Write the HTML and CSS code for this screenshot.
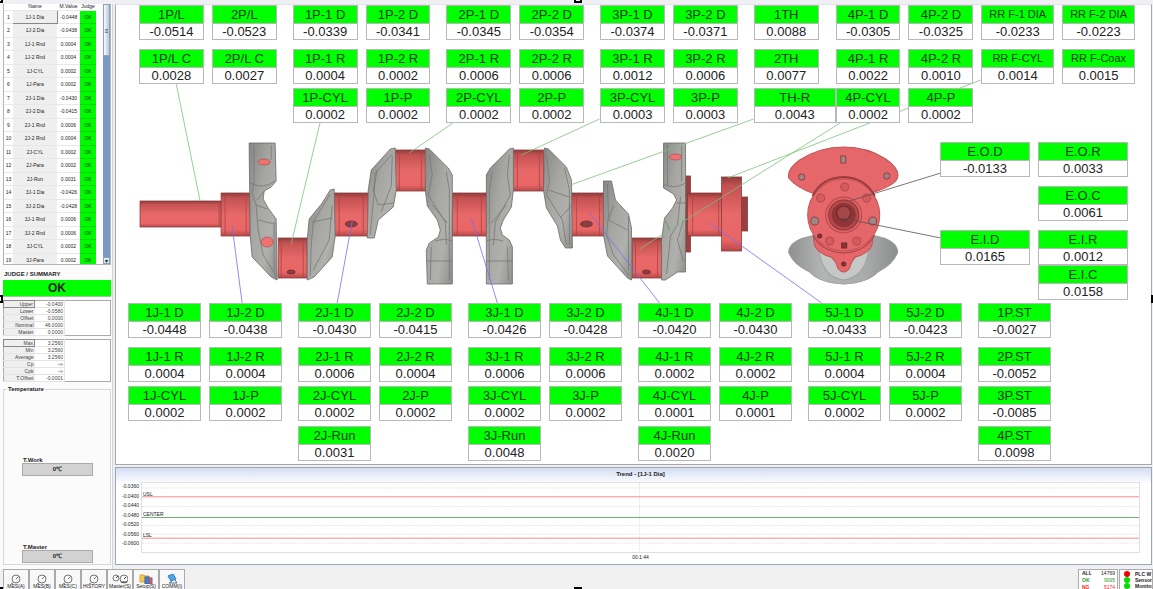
FILE: index.html
```html
<!DOCTYPE html>
<html lang="en">
<head>
  <meta charset="UTF-8" />
  <meta name="viewport" content="width=device-width, initial-scale=1.0"/>
  <title>Crankshaft Measuring</title>
  <link rel="stylesheet" href="styles.css">
</head>
<body>

  <div class="main">

    <!-- LEFT SIDE -->
    <aside class="sidebar">
      <div class="list-box">
        <table class="list">
          <thead>
            <tr><th></th><th>Name</th><th>M.Value</th><th>Judge</th></tr>
          </thead>
          <tbody>
            <tr><td>1</td><th class="selected">1J-1 Dia</th><td>-0.0448</td><td class="ok">OK</td></tr>
            <tr><td>2</td><th>1J-2 Dia</th><td>-0.0438</td><td class="ok">OK</td></tr>
            <tr><td>3</td><th>1J-1 Rnd</th><td>0.0004</td><td class="ok">OK</td></tr>
            <tr><td>4</td><th>1J-2 Rnd</th><td>0.0004</td><td class="ok">OK</td></tr>
            <tr><td>5</td><th>1J-CYL</th><td>0.0002</td><td class="ok">OK</td></tr>
            <tr><td>6</td><th>1J-Para</th><td>0.0002</td><td class="ok">OK</td></tr>
            <tr><td>7</td><th>2J-1 Dia</th><td>-0.0430</td><td class="ok">OK</td></tr>
            <tr><td>8</td><th>2J-2 Dia</th><td>-0.0415</td><td class="ok">OK</td></tr>
            <tr><td>9</td><th>2J-1 Rnd</th><td>0.0006</td><td class="ok">OK</td></tr>
            <tr><td>10</td><th>2J-2 Rnd</th><td>0.0004</td><td class="ok">OK</td></tr>
            <tr><td>11</td><th>2J-CYL</th><td>0.0002</td><td class="ok">OK</td></tr>
            <tr><td>12</td><th>2J-Para</th><td>0.0002</td><td class="ok">OK</td></tr>
            <tr><td>13</td><th>2J-Run</th><td>0.0031</td><td class="ok">OK</td></tr>
            <tr><td>14</td><th>3J-1 Dia</th><td>-0.0426</td><td class="ok">OK</td></tr>
            <tr><td>15</td><th>3J-2 Dia</th><td>-0.0428</td><td class="ok">OK</td></tr>
            <tr><td>16</td><th>3J-1 Rnd</th><td>0.0006</td><td class="ok">OK</td></tr>
            <tr><td>17</td><th>3J-2 Rnd</th><td>0.0006</td><td class="ok">OK</td></tr>
            <tr><td>18</td><th>3J-CYL</th><td>0.0002</td><td class="ok">OK</td></tr>
            <tr><td>19</td><th>3J-Para</th><td>0.0002</td><td class="ok">OK</td></tr>
          </tbody>
        </table>
        <div class="scrollbar"><div class="thumb">≡</div><div class="arrow">▾</div></div>
      </div>

      <h2 class="judge-title">JUDGE / SUMMARY</h2>
      <div class="judge">OK</div>

      <table class="spec">
        <tr><th class="selected">Upper</th><td>-0.0400</td><td></td></tr>
        <tr><th>Lower</th><td>-0.0580</td><td></td></tr>
        <tr><th>Offset</th><td>0.0000</td><td></td></tr>
        <tr><th>Nominal</th><td>46.0000</td><td></td></tr>
        <tr><th>Master</th><td>0.0000</td><td></td></tr>
      </table>

      <table class="spec">
        <tr><th class="selected">Max</th><td>3.2560</td><td></td></tr>
        <tr><th>Min</th><td>3.2560</td><td></td></tr>
        <tr><th>Average</th><td>3.2560</td><td></td></tr>
        <tr><th>Cp</th><td>-∞</td><td></td></tr>
        <tr><th>Cpk</th><td>-∞</td><td></td></tr>
        <tr><th>T.Offset</th><td>-0.0001</td><td></td></tr>
      </table>

      <fieldset class="temperature">
        <legend>Temperature</legend>
        <div class="temp"><label for="tWork">T.Work</label><output id="tWork">0℃</output></div>
        <div class="temp"><label for="tMaster">T.Master</label><output id="tMaster">0℃</output></div>
      </fieldset>
    </aside>

    <div class="content">

      <!-- MEASURE VIEW -->
      <section class="view">
        <svg class="crank" viewBox="117 5 1034 459" preserveAspectRatio="none">
          <defs>
            <linearGradient id="red" x1="0" y1="0" x2="0" y2="1">
              <stop offset="0" stop-color="#8f3b3b"/>
              <stop offset="0.12" stop-color="#c45252"/>
              <stop offset="0.5" stop-color="#e86868"/>
              <stop offset="0.85" stop-color="#ea6666"/>
              <stop offset="1" stop-color="#b84848"/>
            </linearGradient>
            <linearGradient id="gray" x1="0" y1="0" x2="1" y2="1">
              <stop offset="0" stop-color="#868684"/>
              <stop offset="0.4" stop-color="#a6a6a3"/>
              <stop offset="0.7" stop-color="#b0b0ad"/>
              <stop offset="1" stop-color="#8d8d8b"/>
            </linearGradient>
            <linearGradient id="plate" x1="0" y1="0" x2="1" y2="0">
              <stop offset="0" stop-color="#8d908f"/>
              <stop offset="0.3" stop-color="#b2b5b4"/>
              <stop offset="0.7" stop-color="#a9acab"/>
              <stop offset="1" stop-color="#8b8e8d"/>
            </linearGradient>
          </defs>

          <!-- journals and pins -->
          <g fill="url(#red)" stroke="#8a3c3c" stroke-width="0.8">
            <rect x="141" y="201" width="81" height="26"/>
            <rect x="222" y="193" width="29" height="43"/>
            <rect x="279" y="238" width="29" height="40"/>
            <rect x="335" y="193" width="34" height="43"/>
            <rect x="396" y="150" width="31" height="41"/>
            <rect x="453" y="193" width="34" height="43"/>
            <rect x="513" y="150" width="31" height="41"/>
            <rect x="572" y="193" width="33" height="43"/>
            <rect x="633" y="238" width="29" height="40"/>
            <rect x="686" y="176" width="5" height="76" fill="#9c4040"/>
            <rect x="688" y="193" width="34" height="43"/>
            <rect x="742" y="197" width="6" height="34" fill="#984040"/>
            <rect x="722" y="177" width="20" height="74"/>
          </g>
          <path d="M220 201V227M226 193V236M247 193V236M282 238V278M304 238V278M340 193V236M364 193V236M400 150V191M422 150V191M458 193V236M482 193V236M518 150V191M540 150V191M577 193V236M600 193V236M636 238V278M658 238V278M693 193V236M719 193V236" stroke="#a84646" stroke-width="0.8" fill="none"/>

          <!-- webs -->
          <g fill="url(#gray)" stroke="#6a6a68" stroke-width="0.8">
            <path d="M250 143H276L277 181L272 187L265 191L264 199L269 208L277 219L278 280L272 277L253 257L251 235Z"/>
            <path d="M335 189L331 190L323 203L310 219L308 240L308 280L315 277L333 257L336 236Z"/>
            <path d="M396 148L391 149L372 170L369 190L368 238L375 238L379 220L394 207L397 190Z"/>
            <path d="M426 148L430 149L449 168L453 175L453 284H428L427 250L430 243L439 237L441 230L438 220L428 206L426 190Z"/>
            <path d="M514 148L510 149L491 168L487 175L487 284H513L513 247L510 240L503 235L501 228L504 220L512 207L514 190Z"/>
            <path d="M545 148L549 149L567 167L572 180L573 248H566L561 240L558 226L547 208L544 190Z"/>
            <path d="M604 181H612L616 200L629 214L632 228L632 280L628 278L608 256L604 235Z"/>
            <path d="M664 143H686V272H678L666 280H662L662 240L665 218L673 208L677 200L674 194L664 188Z"/>
          </g>
          <path d="M255 145V181L253 193L257 205L259 230L264 255L277 276M272 145V160M251 183Q264 190 276 181M257 205L268 209M259 220L275 224M265 191L258 200M275 222V272M331 194L314 222L312 246L311 276M333 205L330 240L314 270M313 222L333 218M393 154L376 173L375 192L371 234M378 170L374 190L379 205L394 203M393 156L392 186L382 212M430 155L433 175L429 195L446 222L447 245M447 172L450 190V280M432 247L431 280M428 261H453M433 205L448 223M436 241Q446 238 453 241M510 155L508 175L511 195L496 222L494 245M493 172L490 190V280M508 247L509 280M487 261H513M507 205L492 223M504 241Q494 238 487 241M547 155L550 180L547 195L563 220L567 245M565 168L570 190V245M572 205L561 218M549 190L570 197M608 184L609 215L607 235L614 255L630 276M614 205L609 220L628 230M629 216V270M668 145V186M682 145V181M664 184Q675 190 686 183M681 197L678 225L671 236L667 274M677 203H686M684 220L678 240L684 262M666 221L670 230" fill="none" stroke="#777775" stroke-width="0.8"/>

          <!-- oil holes -->
          <g fill="#ee7272" stroke="#b45454" stroke-width="0.8">
            <ellipse cx="265" cy="162" rx="6" ry="3"/>
            <ellipse cx="268" cy="242" rx="6" ry="5"/>
            <ellipse cx="676" cy="157" rx="6" ry="3"/>
          </g>
          <g fill="#8a4040" stroke="#6d2c2c" stroke-width="0.8">
            <ellipse cx="292" cy="272" rx="4" ry="2"/>
            <ellipse cx="352" cy="224" rx="6" ry="3"/>
            <ellipse cx="587" cy="224" rx="6" ry="3"/>
            <ellipse cx="647" cy="272" rx="4" ry="2"/>
          </g>

          <!-- end view -->
          <path d="M812 236Q790 240 789 252Q793 264 810 272Q820 283 844 284Q868 283 878 272Q894 264 898 252Q897 240 876 236Z" fill="url(#plate)" stroke="#969896"/>
          <path d="M815 238L822 262Q828 278 844 280Q860 278 866 262L873 238Z" fill="#c5c8c7" stroke="#a0a2a1"/>
          <path d="M789 178Q787 169 800 160Q820 147 844 147Q868 147 886 159Q900 169 898 177Q897 185 872 193L873 240Q873 252 856 257Q852 260 850 268Q844 276 838 268Q836 260 831 257Q814 252 814 240L815 194Q797 188 789 178Z" fill="#e5676a" stroke="#bd5557"/>
          <circle cx="844" cy="215" r="36" fill="#e5676a" stroke="#c35255"/>
          <path d="M813 196Q821 178 844 177Q866 178 875 196" fill="none" stroke="#9b3c3e" stroke-width="2"/>
          <path d="M813 235Q822 252 844 253Q866 252 875 235" fill="none" stroke="#a64345"/>
          <g fill="#d75b5e" stroke="#ad4c4e">
            <circle cx="845" cy="187" r="4"/>
            <circle cx="821" cy="198" r="4"/>
            <circle cx="867" cy="198" r="4"/>
            <circle cx="830" cy="241" r="4"/>
            <circle cx="857" cy="241" r="4"/>
          </g>
          <g fill="#a08585" stroke="#8b4648">
            <circle cx="815" cy="221" r="4"/>
            <circle cx="873" cy="221" r="4"/>
            <circle cx="802" cy="177" r="3"/>
            <circle cx="887" cy="176" r="3"/>
            <rect x="841" y="156" width="5" height="7"/>
          </g>
          <g fill="#8a3436" stroke="#6d2729">
            <rect x="842" y="243" width="5" height="5"/>
            <circle cx="844" cy="264" r="2"/>
            <circle cx="820" cy="236" r="2"/>
          </g>
          <circle cx="844" cy="215" r="18" fill="#e06265" stroke="#b54b4e"/>
          <circle cx="844" cy="215" r="15" fill="#b5484b" stroke="#8e383a"/>
          <circle cx="844" cy="215" r="12" fill="#8e3537"/>
          <circle cx="844" cy="213" r="7" fill="#a5474a" stroke="#6d2729"/>

          <!-- leader lines -->
          <g fill="none" stroke-width="0.8">
            <path d="M177 83L201 201M321 122L292 244M455 122L410 153M600 119L522 155M754 119L571 185M842 122L640 249M981 80L728 178" stroke="#7cc27c"/>
            <path d="M233 226L243 303M353 221L338 303M472 218L498 303M590 213L660 303M710 223L822 303" stroke="#7070f4"/>
            <path d="M941 173L850 201M941 238L842 218" stroke="#5c5050"/>
          </g>
        </svg>

        <div class="row top">
          <div class="group pair">
            <div class="card"><b>1P/L</b><span>-0.0514</span></div>
            <div class="card"><b>2P/L</b><span>-0.0523</span></div>
            <div class="card"><b>1P/L C</b><span>0.0028</span></div>
            <div class="card"><b>2P/L C</b><span>0.0027</span></div>
          </div>
          <div class="group pair">
            <div class="card"><b>1P-1 D</b><span>-0.0339</span></div>
            <div class="card"><b>1P-2 D</b><span>-0.0341</span></div>
            <div class="card"><b>1P-1 R</b><span>0.0004</span></div>
            <div class="card"><b>1P-2 R</b><span>0.0002</span></div>
            <div class="card"><b>1P-CYL</b><span>0.0002</span></div>
            <div class="card"><b>1P-P</b><span>0.0002</span></div>
          </div>
          <div class="group pair">
            <div class="card"><b>2P-1 D</b><span>-0.0345</span></div>
            <div class="card"><b>2P-2 D</b><span>-0.0354</span></div>
            <div class="card"><b>2P-1 R</b><span>0.0006</span></div>
            <div class="card"><b>2P-2 R</b><span>0.0006</span></div>
            <div class="card"><b>2P-CYL</b><span>0.0002</span></div>
            <div class="card"><b>2P-P</b><span>0.0002</span></div>
          </div>
          <div class="group pair">
            <div class="card"><b>3P-1 D</b><span>-0.0374</span></div>
            <div class="card"><b>3P-2 D</b><span>-0.0371</span></div>
            <div class="card"><b>3P-1 R</b><span>0.0012</span></div>
            <div class="card"><b>3P-2 R</b><span>0.0006</span></div>
            <div class="card"><b>3P-CYL</b><span>0.0003</span></div>
            <div class="card"><b>3P-P</b><span>0.0003</span></div>
          </div>
          <div class="group rear">
            <div class="card th"><b>1TH</b><span>0.0088</span></div>
            <div class="card"><b>4P-1 D</b><span>-0.0305</span></div>
            <div class="card"><b>4P-2 D</b><span>-0.0325</span></div>
            <div class="card small"><b>RR F-1 DIA</b><span>-0.0233</span></div>
            <div class="card small"><b>RR F-2 DIA</b><span>-0.0223</span></div>
            <div class="card th"><b>2TH</b><span>0.0077</span></div>
            <div class="card"><b>4P-1 R</b><span>0.0022</span></div>
            <div class="card"><b>4P-2 R</b><span>0.0010</span></div>
            <div class="card small"><b>RR F-CYL</b><span>0.0014</span></div>
            <div class="card small"><b>RR F-Coax</b><span>0.0015</span></div>
            <div class="card th-r"><b>TH-R</b><span>0.0043</span></div>
            <div class="card"><b>4P-CYL</b><span>0.0002</span></div>
            <div class="card"><b>4P-P</b><span>0.0002</span></div>
          </div>
        </div>

        <div class="row middle">
          <div class="group end">
            <div class="card"><b>E.O.D</b><span>-0.0133</span></div>
            <div class="card"><b>E.O.R</b><span>0.0033</span></div>
            <div class="card right"><b>E.O.C</b><span>0.0061</span></div>
            <div class="card"><b>E.I.D</b><span>0.0165</span></div>
            <div class="card"><b>E.I.R</b><span>0.0012</span></div>
            <div class="card right"><b>E.I.C</b><span>0.0158</span></div>
          </div>
        </div>

        <div class="row bottom">
          <div class="group pair">
            <div class="card"><b>1J-1 D</b><span>-0.0448</span></div>
            <div class="card"><b>1J-2 D</b><span>-0.0438</span></div>
            <div class="card"><b>1J-1 R</b><span>0.0004</span></div>
            <div class="card"><b>1J-2 R</b><span>0.0004</span></div>
            <div class="card"><b>1J-CYL</b><span>0.0002</span></div>
            <div class="card"><b>1J-P</b><span>0.0002</span></div>
          </div>
          <div class="group pair">
            <div class="card"><b>2J-1 D</b><span>-0.0430</span></div>
            <div class="card"><b>2J-2 D</b><span>-0.0415</span></div>
            <div class="card"><b>2J-1 R</b><span>0.0006</span></div>
            <div class="card"><b>2J-2 R</b><span>0.0004</span></div>
            <div class="card"><b>2J-CYL</b><span>0.0002</span></div>
            <div class="card"><b>2J-P</b><span>0.0002</span></div>
            <div class="card"><b>2J-Run</b><span>0.0031</span></div>
          </div>
          <div class="group pair">
            <div class="card"><b>3J-1 D</b><span>-0.0426</span></div>
            <div class="card"><b>3J-2 D</b><span>-0.0428</span></div>
            <div class="card"><b>3J-1 R</b><span>0.0006</span></div>
            <div class="card"><b>3J-2 R</b><span>0.0006</span></div>
            <div class="card"><b>3J-CYL</b><span>0.0002</span></div>
            <div class="card"><b>3J-P</b><span>0.0002</span></div>
            <div class="card"><b>3J-Run</b><span>0.0048</span></div>
          </div>
          <div class="group pair">
            <div class="card"><b>4J-1 D</b><span>-0.0420</span></div>
            <div class="card"><b>4J-2 D</b><span>-0.0430</span></div>
            <div class="card"><b>4J-1 R</b><span>0.0002</span></div>
            <div class="card"><b>4J-2 R</b><span>0.0002</span></div>
            <div class="card"><b>4J-CYL</b><span>0.0001</span></div>
            <div class="card"><b>4J-P</b><span>0.0001</span></div>
            <div class="card"><b>4J-Run</b><span>0.0020</span></div>
          </div>
          <div class="group pair">
            <div class="card"><b>5J-1 D</b><span>-0.0433</span></div>
            <div class="card"><b>5J-2 D</b><span>-0.0423</span></div>
            <div class="card"><b>5J-1 R</b><span>0.0004</span></div>
            <div class="card"><b>5J-2 R</b><span>0.0004</span></div>
            <div class="card"><b>5J-CYL</b><span>0.0002</span></div>
            <div class="card"><b>5J-P</b><span>0.0002</span></div>
          </div>
          <div class="group stroke">
            <div class="card"><b>1P.ST</b><span>-0.0027</span></div>
            <div class="card"><b>2P.ST</b><span>-0.0052</span></div>
            <div class="card"><b>3P.ST</b><span>-0.0085</span></div>
            <div class="card"><b>4P.ST</b><span>0.0098</span></div>
          </div>
        </div>
      </section>

      <!-- TREND CHART -->
      <section class="trend">
        <h2>Trend - [1J-1 Dia]</h2>
        <div class="chart">
          <div class="scale">
            <span>-0.0360</span><span>-0.0400</span><span>-0.0440</span><span>-0.0480</span><span>-0.0520</span><span>-0.0560</span><span>-0.0600</span>
          </div>
          <div class="plot">
            <svg viewBox="0 0 1000 70" preserveAspectRatio="none">
              <path d="M0 5H1000M0 24H1000M0 43H1000M0 52H1000M0 61H1000M499 0V70" stroke="#e6e6e6" stroke-dasharray="2 1"/>
              <path d="M0 14H1000M0 56H1000" stroke="#f58c8c"/>
              <path d="M0 35H1000" stroke="#6fae6f"/>
            </svg>
            <span class="limit usl">USL</span>
            <span class="limit center">CENTER</span>
            <span class="limit lsl">LSL</span>
          </div>
        </div>
        <div class="time">00:1:44</div>
      </section>
    </div>
  </div>

  <!-- BOTTOM BAR -->
  <footer class="toolbar">
    <div class="buttons">
      <button><svg viewBox="0 0 16 10"><circle cx="8" cy="5" r="4"/><path d="M8 5L11 2M5 9L3 10"/></svg>MES(A)</button>
      <button><svg viewBox="0 0 16 10"><circle cx="8" cy="5" r="4"/><path d="M8 5L11 2M5 9L3 10"/></svg>MES(B)</button>
      <button><svg viewBox="0 0 16 10"><circle cx="8" cy="5" r="4"/><path d="M8 5L11 2M5 9L3 10"/></svg>MES(C)</button>
      <button><svg viewBox="0 0 16 10"><circle cx="8" cy="5" r="4"/><path d="M8 5L11 2M5 9L3 10"/></svg>HISTORY</button>
      <button><svg viewBox="0 0 16 10"><circle cx="4" cy="4" r="3"/><circle cx="12" cy="5" r="4"/><path d="M4 4L6 2M12 5L14 3M9 8L15 8" stroke="#333"/></svg>Master(S)</button>
      <button><svg viewBox="0 0 16 10"><path d="M2 1H6L7 2H11V8H2Z" fill="#f2c94c" stroke="#d9a93a"/><rect x="7" y="3" width="4" height="7" fill="#4b7fd0" stroke="#3560a8"/><rect x="11" y="4" width="3" height="6" fill="#c96a5a" stroke="#8b5a8b"/></svg>Setup(S)</button>
      <button><svg viewBox="0 0 16 10"><path d="M4 2L9 0L12 5L7 7Z" fill="#4fa8ee" stroke="#2c78c8"/><path d="M8 7L5 9H13L11 6" stroke="#5a7088"/></svg>COMM(I)</button>
    </div>
    <table class="counts">
      <tr><th>ALL</th><td>14769</td></tr>
      <tr class="count-ok"><th>OK</th><td>9995</td></tr>
      <tr class="count-ng"><th>NG</th><td>5174</td></tr>
    </table>
    <ul class="status">
      <li class="off">PLC W</li>
      <li>Sensor</li>
      <li>Monitor</li>
    </ul>
  </footer>

  <i class="handle h-top-left"></i>
  <i class="handle h-top"></i>
  <i class="handle h-left"></i>
  <i class="handle h-right"></i>
  <i class="handle h-bottom-left"></i>
  <i class="handle h-bottom"></i>

</body>
</html>
```
FILE: styles.css
```css
* {
  box-sizing: border-box;
}

body {
  margin: 0;
  height: 100vh;
  min-height: 589px;
  display: flex;
  flex-direction: column;
  position: relative;
  overflow: hidden;
  padding-top: 4px;
  background-color: #eef0f3;
  font-family: "Liberation Sans", Arial, sans-serif;
  font-size: 6px;
  color: #222;
}

table {
  border-collapse: collapse;
}

.main {
  flex: 1;
  display: flex;
  min-height: 0;
}

/* LEFT SIDE */
.sidebar {
  width: 113px;
  padding: 0 1px 4px 3px;
  margin-right: 2px;
  display: flex;
  flex-direction: column;
  background-color: #fbfbfc;
  border-right: 1px solid #d4d4d8;
}

.list-box {
  display: flex;
  align-items: flex-start;
  height: 261px;
  overflow: hidden;
  border: 1px solid #b4b4b4;
  border-top: 0;
  background: white;
}

.list {
  width: 92px;
  height: 263px;
  table-layout: fixed;
  font-size: 5px;
  line-height: 8px;
}

.list th, .list td {
  padding: 0;
  text-align: center;
  font-weight: normal;
  white-space: nowrap;
  border-bottom: 1px solid #e8e8e8;
}

.list thead th {
  height: 6px;
  line-height: 5px;
}

.list th:nth-child(1), .list td:nth-child(1) {
  width: 9px;
}

.list th:nth-child(2) {
  width: 44px;
}

.list th:nth-child(3) {
  width: 23px;
}

.list tbody th {
  background-color: #efefef;
}

.list td.ok {
  background-color: #00fa00;
  border-bottom-color: #00d800;
  color: #064006;
}

.list .selected {
  border-right: 1px solid #888;
  border-bottom: 1px solid #888;
}

.scrollbar {
  width: 7px;
  height: 100%;
  margin-left: auto;
  display: flex;
  flex-direction: column;
  justify-content: space-between;
  text-align: center;
  background-color: #7899c4;
}

.thumb {
  height: 52px;
  line-height: 52px;
  background: linear-gradient(to right, #fafcff, #b8c8e0);
  border: 1px solid #8ca0c0;
}

.arrow {
  height: 7px;
  line-height: 6px;
  background-color: #dce6f4;
  border: 1px solid #8ca0c0;
}

.judge-title {
  margin: 5px 0 1px 1px;
  font-size: 6px;
  line-height: 9px;
  white-space: nowrap;
}

.judge {
  height: 17px;
  line-height: 17px;
  background-color: #00ff00;
  border-bottom: 1px solid #9bc79b;
  text-align: center;
  font-size: 12px;
  font-weight: bold;
}

.spec {
  margin-top: 3px;
  width: 100%;
  border: 1px solid #aaa;
  background: white;
  font-size: 5px;
  line-height: 6px;
  color: #444;
}

.spec th, .spec td {
  height: 7px;
  padding: 0 1px;
  text-align: right;
  font-weight: normal;
  border-bottom: 1px solid #e4e4e4;
}

.spec th {
  width: 31px;
  background-color: #efefef;
}

.spec td:nth-child(2) {
  width: 30px;
  border-right: 1px solid #e4e4e4;
}

.spec td:nth-child(3) {
  border-bottom: 0;
}

.spec th.selected {
  border: 1px solid #888;
}

.temperature {
  flex: 1;
  margin: 3px 0 0;
  padding: 0 17px 1px 18px;
  min-width: 0;
  display: flex;
  flex-direction: column;
  justify-content: flex-end;
  gap: 68px;
  border: 1px solid #d8d8d8;
  font-weight: bold;
}

.temperature legend {
  margin-left: -15px;
  padding: 0 1px;
  line-height: 8px;
}

.temp label {
  display: block;
  padding-left: 1px;
  line-height: 6px;
}

.temp output {
  display: block;
  height: 13px;
  line-height: 11px;
  text-align: center;
  background-color: #d2d2d2;
  border: 1px solid #aaa;
}

/* MEASURE VIEW */
.content {
  flex: 1;
  min-width: 0;
  display: flex;
  flex-direction: column;
  padding-right: 1px;
}

.view {
  position: relative;
  height: 461px;
  background: white;
  border: 1px solid #a8a8ac;
  border-top-color: #e4e4e8;
}

.crank {
  position: absolute;
  top: 0;
  left: 0;
  width: 100%;
  height: 100%;
}

.row {
  position: relative;
  display: flex;
}

.top {
  gap: 16px;
  padding: 0 16px 0 23px;
}

.middle {
  justify-content: flex-end;
  padding: 19px 23px 0 0;
}

.bottom {
  gap: 16px;
  padding: 3px 100px 0 12px;
}

.group {
  display: grid;
  column-gap: 8px;
  align-items: start;
  grid-template-rows: 44px 39px 35px;
}

.pair {
  flex: 138;
  grid-template-columns: 1fr 1fr;
}

.rear {
  flex: 382;
  grid-template-columns: 74fr 65fr 65fr 73fr 73fr;
}

.middle .end {
  width: 19%;
  min-width: 188px;
  max-width: 188px;
  grid-template-columns: 1fr 1fr;
  grid-template-rows: 44px 44px 35px 35px;
}

.bottom .group {
  grid-template-rows: 44px 39px 40px 35px;
}

.bottom .pair {
  flex: 154;
}

.stroke {
  flex: 73;
}

.card {
  height: 35px;
  display: flex;
  flex-direction: column;
  border: 1px solid #b8b8b8;
  background: white;
  text-align: center;
  font-size: 13px;
  line-height: 16px;
  white-space: nowrap;
}

.card b {
  height: 18px;
  line-height: 17px;
  font-weight: normal;
  color: #063c06;
  background-color: #00ff00;
  border-bottom: 1px solid #b8b8b8;
}

.small b {
  font-size: 11px;
}

.th {
  margin-right: 9px;
}

.th-r {
  margin-right: -8px;
}

.right {
  grid-column: 2;
}

/* TREND CHART */
.trend {
  flex: 1;
  margin: 2px 0 4px;
  background: linear-gradient(#d3def4, white 16px);
  border: 1px solid #a0a4ac;
}

.trend h2 {
  margin: 3px 0 4px;
  padding-left: 14px;
  font-size: 6px;
  line-height: 7px;
  text-align: center;
}

.chart {
  display: flex;
  height: 71px;
  padding-right: 11px;
}

.scale {
  width: 25px;
  display: flex;
  flex-direction: column;
  justify-content: space-between;
  padding: 0 2px 5px 0;
  text-align: right;
  font-size: 5px;
  line-height: 9px;
}

.plot {
  flex: 1;
  position: relative;
  border: 1px solid #e0e0e0;
}

.plot svg {
  display: block;
  width: 100%;
  height: 100%;
}

.limit {
  position: absolute;
  left: 1px;
  font-size: 5px;
  line-height: 6px;
}

.usl {
  top: 11%;
}

.center {
  top: 41%;
}

.lsl {
  top: 71%;
}

.time {
  padding-left: 14px;
  text-align: center;
  font-size: 5px;
  line-height: 9px;
}

/* BOTTOM BAR */
.toolbar {
  height: 20px;
  display: flex;
  overflow: hidden;
  background-color: #f0f0f0;
}

.buttons {
  flex: 1;
  display: flex;
  padding-left: 3px;
}

.toolbar button {
  width: 26px;
  height: 22px;
  padding: 2px 0 0;
  border: 1px solid #aaa;
  background-color: #f8f8f8;
  font-family: inherit;
  font-size: 5px;
  line-height: 5px;
  color: #222;
  white-space: nowrap;
}

.toolbar svg {
  display: block;
  width: 16px;
  height: 10px;
  margin: 0 auto;
  fill: none;
  stroke: #777;
}

.counts {
  width: 40px;
  height: 22px;
  margin-right: 1px;
  border: 1px solid #aaa;
  background: white;
  font-size: 5px;
  line-height: 6px;
}

.counts th {
  padding: 0 0 0 3px;
  text-align: left;
}

.counts td {
  padding: 0 2px 0 0;
  text-align: right;
}

.count-ok {
  color: #2a9a2a;
}

.count-ng {
  color: #ff2020;
}

.status {
  width: 34px;
  height: 22px;
  margin: 0;
  padding: 1px 0 0 4px;
  list-style: none;
  overflow: hidden;
  background: white;
  border: 1px solid #aaa;
  font-size: 5px;
  font-weight: bold;
  white-space: nowrap;
}

.status li {
  display: flex;
  align-items: center;
  gap: 5px;
  line-height: 6px;
}

.status li::before {
  content: "";
  width: 6px;
  height: 6px;
  flex: none;
  border-radius: 50%;
  background-color: #00e000;
}

.status .off::before {
  background-color: #f00000;
}

/* SELECTION HANDLES */
.handle {
  position: absolute;
  width: 8px;
  height: 8px;
  border: 2px solid #000;
  background: white;
}

.h-top-left {
  top: -5px;
  left: -5px;
}

.h-top {
  top: -5px;
  left: 50%;
  margin-left: -3px;
}

.h-left {
  top: 50%;
  left: -5px;
}

.h-right {
  top: 50%;
  right: -6px;
}

.h-bottom-left {
  bottom: -6px;
  left: -5px;
}

.h-bottom {
  bottom: -6px;
  left: 50%;
  margin-left: -3px;
}
```
